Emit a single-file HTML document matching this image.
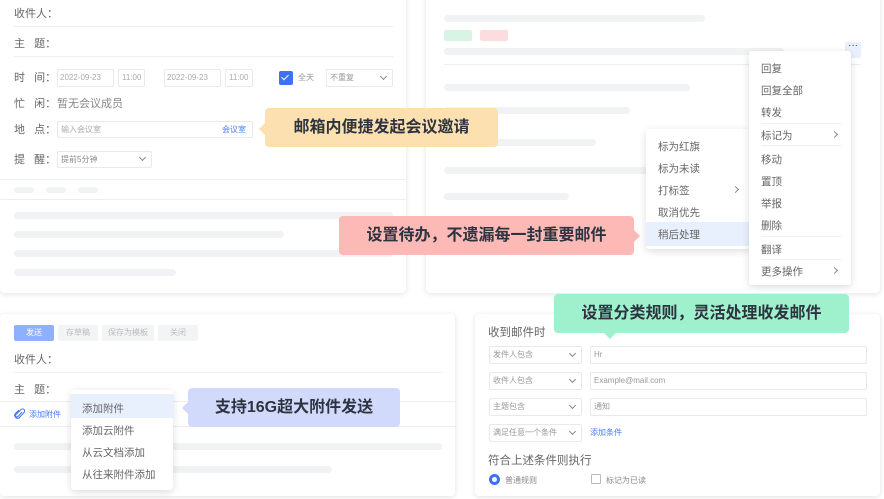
<!DOCTYPE html>
<html><head><meta charset="utf-8"><style>
*{margin:0;padding:0;box-sizing:border-box}
body{width:884px;height:499px;background:#fff;position:relative;overflow:hidden;font-family:"Liberation Sans","Noto Sans CJK SC",sans-serif;color:#555}
.a{position:absolute}
.panel{position:absolute;background:#fff;border-radius:4px;box-shadow:0 1px 6px rgba(0,0,0,.12)}
.t{position:absolute;font-size:11px;line-height:12px;color:#666;white-space:nowrap}
.s{position:absolute;font-size:8px;line-height:10px;color:#aaa;white-space:nowrap}
.line{position:absolute;height:1px;background:#eceef1}
.bar{position:absolute;height:7px;border-radius:4px;background:#f1f2f4}
.box{position:absolute;border:1px solid #e8e9ec;border-radius:2px;background:#fff}
.callout{position:absolute;border-radius:4px;font-size:16px;font-weight:bold;color:#2d3440;text-align:center;line-height:39px;height:39px}
.menu{position:absolute;background:#fff;border-radius:3px;box-shadow:0 2px 8px rgba(0,0,0,.14)}
.mi{position:absolute;font-size:10.5px;color:#666;white-space:nowrap}
.chev{position:absolute;width:5px;height:5px;border-right:1px solid #888;border-bottom:1px solid #888}
</style></head><body>

<!-- Panel 1 -->
<div class="panel" style="left:0;top:-6px;width:406px;height:299px"></div>
<div class="t" style="left:14px;top:8px">收件人：</div>
<div class="line" style="left:14px;top:26px;width:379px"></div>
<div class="t" style="left:14px;top:38px">主&nbsp;&nbsp;&nbsp;题：</div>
<div class="line" style="left:14px;top:56px;width:379px"></div>
<div class="t" style="left:14px;top:72px">时&nbsp;&nbsp;&nbsp;间：</div>
<div class="box" style="left:57px;top:69px;width:57px;height:18px"></div><div class="s" style="left:60px;top:73px">2022-09-23</div>
<div class="box" style="left:118px;top:69px;width:27px;height:18px"></div><div class="s" style="left:122px;top:73px">11:00</div>
<div class="box" style="left:164px;top:69px;width:57px;height:18px"></div><div class="s" style="left:167px;top:73px">2022-09-23</div>
<div class="box" style="left:225px;top:69px;width:28px;height:18px"></div><div class="s" style="left:229px;top:73px">11:00</div>
<div class="a" style="left:279px;top:71px;width:14px;height:14px;background:#3f72f0;border-radius:2px"></div>
<div class="a" style="left:283px;top:73px;width:4px;height:7px;border-right:1.5px solid #fff;border-bottom:1.5px solid #fff;transform:rotate(45deg)"></div>
<div class="s" style="left:298px;top:73px;color:#999">全天</div>
<div class="box" style="left:326px;top:69px;width:67px;height:18px"></div><div class="s" style="left:330px;top:73px;color:#999">不重复</div>
<div class="chev" style="left:381px;top:74px;transform:rotate(45deg)"></div>
<div class="t" style="left:14px;top:98px">忙&nbsp;&nbsp;&nbsp;闲：</div>
<div class="t" style="left:57px;top:98px;color:#888">暂无会议成员</div>
<div class="t" style="left:14px;top:124px">地&nbsp;&nbsp;&nbsp;点：</div>
<div class="box" style="left:57px;top:121px;width:196px;height:17px"></div>
<div class="s" style="left:61px;top:125px">输入会议室</div>
<div class="s" style="left:222px;top:125px;color:#4a7bf0">会议室</div>
<div class="t" style="left:14px;top:154px">提&nbsp;&nbsp;&nbsp;醒：</div>
<div class="box" style="left:57px;top:151px;width:95px;height:17px"></div><div class="s" style="left:61px;top:155px;color:#888">提前5分钟</div>
<div class="chev" style="left:140px;top:155px;transform:rotate(45deg)"></div>
<div class="line" style="left:0;top:179px;width:406px"></div>
<div class="bar" style="left:14px;top:187px;width:20px;height:6px"></div>
<div class="bar" style="left:46px;top:187px;width:20px;height:6px"></div>
<div class="bar" style="left:78px;top:187px;width:20px;height:6px"></div>
<div class="line" style="left:0;top:199px;width:406px"></div>
<div class="bar" style="left:14px;top:212px;width:379px"></div>
<div class="bar" style="left:14px;top:231px;width:270px"></div>
<div class="bar" style="left:14px;top:250px;width:379px"></div>
<div class="bar" style="left:14px;top:269px;width:162px"></div>

<!-- Panel 2 -->
<div class="panel" style="left:426px;top:-6px;width:454px;height:299px"></div>
<div class="bar" style="left:444px;top:15px;width:261px"></div>
<div class="a" style="left:444px;top:30px;width:28px;height:11px;background:#d8f4e4;border-radius:2px"></div>
<div class="a" style="left:480px;top:30px;width:28px;height:11px;background:#fcdcde;border-radius:2px"></div>
<div class="bar" style="left:444px;top:48px;width:340px"></div>
<div class="line" style="left:444px;top:64px;width:417px"></div>
<div class="a" style="left:845px;top:42px;width:16px;height:16px;background:#e8effd;border-radius:2px;font-size:10px;line-height:8px;text-align:center;color:#333">···</div>
<div class="bar" style="left:444px;top:84px;width:246px"></div>
<div class="bar" style="left:444px;top:107px;width:186px"></div>
<div class="bar" style="left:444px;top:139px;width:152px"></div>
<div class="bar" style="left:444px;top:167px;width:236px"></div>
<div class="bar" style="left:444px;top:193px;width:125px"></div>

<div class="menu" style="left:646px;top:129px;width:104px;height:120px"></div>
<div class="a" style="left:646px;top:222px;width:104px;height:24px;background:#e8effd"></div>
<div class="mi" style="left:658px;top:139px">标为红旗</div>
<div class="mi" style="left:658px;top:161px">标为未读</div>
<div class="mi" style="left:658px;top:183px">打标签</div>
<div class="chev" style="left:733px;top:187px;transform:rotate(-45deg)"></div>
<div class="mi" style="left:658px;top:205px">取消优先</div>
<div class="mi" style="left:658px;top:227px">稍后处理</div>

<div class="menu" style="left:749px;top:51px;width:102px;height:234px"></div>
<div class="mi" style="left:761px;top:61px">回复</div>
<div class="mi" style="left:761px;top:83px">回复全部</div>
<div class="mi" style="left:761px;top:105px">转发</div>
<div class="line" style="left:761px;top:123px;width:80px"></div>
<div class="mi" style="left:761px;top:128px">标记为</div>
<div class="chev" style="left:832px;top:132px;transform:rotate(-45deg)"></div>
<div class="line" style="left:761px;top:145px;width:80px"></div>
<div class="mi" style="left:761px;top:152px">移动</div>
<div class="mi" style="left:761px;top:174px">置顶</div>
<div class="mi" style="left:761px;top:196px">举报</div>
<div class="mi" style="left:761px;top:218px">删除</div>
<div class="line" style="left:761px;top:236px;width:80px"></div>
<div class="mi" style="left:761px;top:242px">翻译</div>
<div class="line" style="left:761px;top:259px;width:80px"></div>
<div class="mi" style="left:761px;top:264px">更多操作</div>
<div class="chev" style="left:832px;top:268px;transform:rotate(-45deg)"></div>

<!-- Panel 3 -->
<div class="panel" style="left:0;top:314px;width:455px;height:182px"></div>
<div class="a" style="left:14px;top:325px;width:40px;height:16px;background:#8fb0ff;border-radius:2px;color:#fff;font-size:8px;line-height:16px;text-align:center">发送</div>
<div class="a" style="left:58px;top:325px;width:40px;height:16px;background:#f3f4f6;border-radius:2px;color:#bbb;font-size:8px;line-height:16px;text-align:center">存草稿</div>
<div class="a" style="left:102px;top:325px;width:52px;height:16px;background:#f3f4f6;border-radius:2px;color:#bbb;font-size:8px;line-height:16px;text-align:center">保存为模板</div>
<div class="a" style="left:158px;top:325px;width:40px;height:16px;background:#f3f4f6;border-radius:2px;color:#bbb;font-size:8px;line-height:16px;text-align:center">关闭</div>
<div class="t" style="left:14px;top:354px">收件人：</div>
<div class="line" style="left:14px;top:372px;width:428px"></div>
<div class="t" style="left:14px;top:384px">主&nbsp;&nbsp;&nbsp;题：</div>
<div class="line" style="left:0;top:401px;width:455px"></div>
<svg class="a" style="left:14px;top:408px" width="11" height="12" viewBox="0 0 11 12"><path d="M8 4 L4 8.5 a1.3 1.3 0 0 1 -2 -2 L7 1.5 a2 2 0 0 1 3 3 L5 10 a3 3 0 0 1 -4 -4 L5 2" fill="none" stroke="#4a7bf0" stroke-width="1.1"/></svg>
<div class="s" style="left:29px;top:410px;color:#4a7bf0">添加附件</div>
<div class="line" style="left:0;top:426px;width:455px"></div>
<div class="bar" style="left:14px;top:443px;width:428px"></div>
<div class="bar" style="left:14px;top:466px;width:318px"></div>
<div class="menu" style="left:71px;top:390px;width:102px;height:100px"></div>
<div class="a" style="left:71px;top:394px;width:102px;height:24px;background:#e8effd"></div>
<div class="mi" style="left:82px;top:401px">添加附件</div>
<div class="mi" style="left:82px;top:423px">添加云附件</div>
<div class="mi" style="left:82px;top:445px">从云文档添加</div>
<div class="mi" style="left:82px;top:467px">从往来附件添加</div>

<!-- Panel 4 -->
<div class="panel" style="left:475px;top:314px;width:405px;height:182px"></div>
<div class="t" style="left:488px;top:327px;font-size:11.5px">收到邮件时</div>
<div class="box" style="left:489px;top:346px;width:93px;height:18px"></div><div class="s" style="left:493px;top:350px;color:#999">发件人包含</div><div class="chev" style="left:570px;top:351px;transform:rotate(45deg)"></div>
<div class="box" style="left:590px;top:346px;width:277px;height:18px"></div><div class="s" style="left:594px;top:350px;color:#999">Hr</div>
<div class="box" style="left:489px;top:372px;width:93px;height:18px"></div><div class="s" style="left:493px;top:376px;color:#999">收件人包含</div><div class="chev" style="left:570px;top:377px;transform:rotate(45deg)"></div>
<div class="box" style="left:590px;top:372px;width:277px;height:18px"></div><div class="s" style="left:594px;top:376px;color:#999">Example@mail.com</div>
<div class="box" style="left:489px;top:398px;width:93px;height:18px"></div><div class="s" style="left:493px;top:402px;color:#999">主题包含</div><div class="chev" style="left:570px;top:403px;transform:rotate(45deg)"></div>
<div class="box" style="left:590px;top:398px;width:277px;height:18px"></div><div class="s" style="left:594px;top:402px;color:#999">通知</div>
<div class="box" style="left:489px;top:424px;width:93px;height:18px"></div><div class="s" style="left:493px;top:428px;color:#999">满足任意一个条件</div><div class="chev" style="left:570px;top:429px;transform:rotate(45deg)"></div>
<div class="s" style="left:590px;top:428px;color:#4a7bf0">添加条件</div>
<div class="t" style="left:488px;top:455px;font-size:11.5px">符合上述条件则执行</div>
<div class="a" style="left:489px;top:474px;width:11px;height:11px;border:3px solid #3f72f0;border-radius:50%"></div>
<div class="s" style="left:505px;top:476px;color:#888">普通规则</div>
<div class="a" style="left:591px;top:474px;width:10px;height:10px;border:1px solid #bbb;border-radius:1px"></div>
<div class="s" style="left:606px;top:476px;color:#888">标记为已读</div>

<!-- Callouts -->
<div class="callout" style="left:265px;top:108px;width:233px;background:#fde0b0">邮箱内便捷发起会议邀请</div>
<div class="a" style="left:259px;top:123px;width:0;height:0;border-top:6px solid transparent;border-bottom:6px solid transparent;border-right:6px solid #fde0b0"></div>
<div class="callout" style="left:339px;top:216px;width:295px;background:#fcb9b5">设置待办，不遗漏每一封重要邮件</div>
<div class="a" style="left:634px;top:230px;width:0;height:0;border-top:6px solid transparent;border-bottom:6px solid transparent;border-left:6px solid #fcb9b5"></div>
<div class="callout" style="left:554px;top:294px;width:295px;background:#9ff0cc">设置分类规则，灵活处理收发邮件</div>
<div class="a" style="left:604px;top:333px;width:0;height:0;border-left:6px solid transparent;border-right:6px solid transparent;border-top:6px solid #9ff0cc"></div>
<div class="callout" style="left:188px;top:388px;width:212px;background:#d2dafc">支持16G超大附件发送</div>
<div class="a" style="left:182px;top:402px;width:0;height:0;border-top:6px solid transparent;border-bottom:6px solid transparent;border-right:6px solid #d2dafc"></div>
</body></html>
